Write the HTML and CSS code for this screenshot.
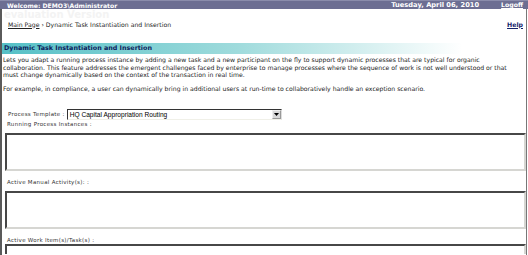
FILE: index.html
```html
<!DOCTYPE html>
<html>
<head>
<meta charset="utf-8">
<link rel="stylesheet" href="styles.css">
</head>
<body>
<div class="topbar">
  <span class="welcome">Welcome: DEMO3\Administrator</span>
  <span class="topright"><span class="date">Tuesday, April 06, 2010</span><a class="logoff" href="#">Logoff</a></span>
</div>
<div class="page">
  <div class="watermark">evaluation Version</div>
  <div class="crumbs">
    <span><a class="crumb-link" href="#">Main Page</a> <span class="sep">›</span> Dynamic Task Instantiation and Insertion</span>
    <a class="help" href="#">Help</a>
  </div>
  <div class="band">Dynamic Task Instantiation and Insertion</div>
  <p class="para1">Lets you adapt a running process instance by adding a new task and a new participant on the fly to support dynamic processes that are typical for organic<br>collaboration. This feature addresses the emergent challenges faced by enterprise to manage processes where the sequence of work is not well understood or that<br>must change dynamically based on the context of the transaction in real time.</p>
  <p class="para2">For example, in compliance, a user can dynamically bring in additional users at run-time to collaboratively handle an exception scenario.</p>
  <div class="template-row">
    <span class="label">Process Template :</span>
    <div class="select"><span class="select-text">HQ Capital Appropriation Routing</span><span class="arrow"><svg width="5" height="3" viewBox="0 0 5 3"><path d="M0 0H5L2.5 3Z" fill="#000"/></svg></span></div>
  </div>
  <div class="label field-label">Running Process Instances :</div>
  <textarea class="box"></textarea>
  <div class="label field-label gap">Active Manual Activity(s): :</div>
  <textarea class="box"></textarea>
  <div class="label field-label gap2">Active Work Item(s)/Task(s) :</div>
  <textarea class="box last"></textarea>
</div>
</body>
</html>
```
FILE: styles.css
```css
html, body {
  margin: 0;
  padding: 0;
  background: #fff;
}
body {
  font-family: "DejaVu Sans", Verdana, sans-serif;
  font-size: 6.15px;
  color: #222;
  width: 528px;
  height: 255px;
  overflow: hidden;
}
a { color: inherit; }
.topbar {
  height: 9px;
  background: #6c6e92;
  border-top: 1px solid #8a8cab;
  box-sizing: border-box;
  color: #fff;
  font-weight: bold;
  display: flex;
  justify-content: space-between;
  align-items: center;
  padding: 0 5px 0 7px;
}
.welcome { font-size: 6.1px; }
.topright {
  display: flex;
  gap: 22px;
}
.date { font-size: 6.7px; }
.logoff { color: #fff; font-size: 6.2px; }
.page {
  position: relative;
  width: 527px;
  height: 246px;
  box-sizing: border-box;
  border-left: 2px solid #5a5a5a;
  border-right: 1px solid #777;
  padding: 11px 1px 0 3px;
  overflow: hidden;
}
.watermark {
  position: absolute;
  left: 2px;
  top: 0;
  font-size: 10px;
  font-weight: bold;
  color: #f3f3f3;
}
.crumbs {
  position: relative;
  display: flex;
  justify-content: space-between;
  align-items: center;
  height: 8px;
  padding-left: 3px;
  color: #222;
}
.crumb-link { color: #222; }
.help {
  color: #14226a;
  font-weight: bold;
  font-size: 6.2px;
  margin-right: 2px;
}
.band {
  margin: 15px 0 0 -3px;
  height: 11px;
  line-height: 11px;
  padding-left: 2px;
  background: linear-gradient(to right, #55c0c6 0%, #9fdbdc 45%, #ffffff 88%);
  color: #0c1d5c;
  font-weight: bold;
  font-size: 6.4px;
}
p {
  margin: 0;
  line-height: 7.5px;
  margin-left: -2px;
  white-space: nowrap;
}
.para1 { margin-top: 2px; }
.para2 { margin-top: 6.5px; }
.template-row {
  display: flex;
  align-items: center;
  margin-top: 16px;
  height: 11px;
  padding-left: 3px;
}
.label { color: #333; font-size: 5.5px; letter-spacing: 0.3px; }
.select {
  margin-left: 2px;
  width: 215px;
  height: 11px;
  box-sizing: border-box;
  border-top: 1px solid #333;
  border-left: 1px solid #333;
  border-bottom: 1px solid #f0f0e8;
  border-right: 1px solid #ddd;
  display: flex;
  align-items: center;
  justify-content: space-between;
  font-family: "Liberation Sans", Arial, sans-serif;
  font-size: 6.6px;
  color: #000;
  padding-left: 2px;
  letter-spacing: 0;
}
.arrow {
  width: 9px;
  height: 9px;
  box-sizing: border-box;
  background: #d8d8d8;
  border: 1px solid #999;
  border-top-color: #eee;
  border-left-color: #eee;
  display: flex;
  align-items: center;
  justify-content: center;
}
.field-label {
  height: 8px;
  line-height: 8px;
  padding-left: 2px;
}
.gap { margin-top: 7px; }
.gap2 { margin-top: 7px; }
.box {
  display: block;
  width: 521px;
  height: 38px;
  margin: 5px 0 0 0;
  box-sizing: border-box;
  resize: none;
  background: #fff;
  border-top: 2px solid #474747;
  border-left: 2px solid #474747;
  border-bottom: 2px solid #d6d6d2;
  border-right: 2px solid #d6d6d2;
  padding: 0;
}
.box.last { height: 10px; border-bottom: none; margin-top: 0; }
```
